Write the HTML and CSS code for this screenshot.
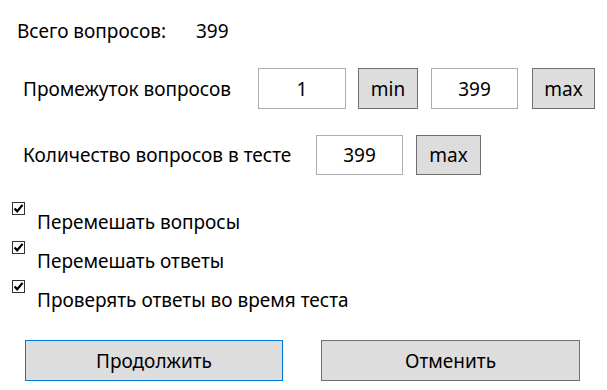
FILE: index.html
```html
<!DOCTYPE html>
<html lang="ru">
<head>
    <meta charset="UTF-8">
    <title>Настройки теста</title>
    <link rel="stylesheet" href="styles.css">
</head>
<body>
    <div class="window">
        <div class="row total">
            <span class="total-label">Всего вопросов:</span>
            <span class="total-value">399</span>
        </div>

        <div class="row range">
            <span class="label range-label">Промежуток вопросов</span>
            <div class="textbox tb-from">1</div>
            <div class="btn btn-min">min</div>
            <div class="textbox tb-to">399</div>
            <div class="btn btn-max">max</div>
        </div>

        <div class="row count">
            <span class="label count-label">Количество вопросов в тесте</span>
            <div class="textbox tb-count">399</div>
            <div class="btn btn-count">max</div>
        </div>

        <div class="checks">
            <div class="check">
                <span class="box"><svg viewBox="0 0 11 11"><path d="M1.6 5.4 L4.2 8.3 L9.6 1.9" /></svg></span>
                <span class="check-text">Перемешать вопросы</span>
            </div>
            <div class="check">
                <span class="box"><svg viewBox="0 0 11 11"><path d="M1.6 5.4 L4.2 8.3 L9.6 1.9" /></svg></span>
                <span class="check-text">Перемешать ответы</span>
            </div>
            <div class="check">
                <span class="box"><svg viewBox="0 0 11 11"><path d="M1.6 5.4 L4.2 8.3 L9.6 1.9" /></svg></span>
                <span class="check-text">Проверять ответы во время теста</span>
            </div>
        </div>

        <div class="actions">
            <div class="btn btn-ok">Продолжить</div>
            <div class="btn btn-cancel">Отменить</div>
        </div>
    </div>
</body>
</html>
```

FILE: styles.css
```css
* {
    margin: 0;
    padding: 0;
    box-sizing: border-box;
}

body {
    width: 607px;
    height: 390px;
    background: #fff;
    color: #000;
    font-family: 'Noto Sans', 'Open Sans', sans-serif;
    font-size: 19px;
    overflow: hidden;
}

.window {
    padding-top: 19px;
}

.row {
    display: flex;
    align-items: center;
}

.total {
    height: 24px;
    padding-left: 17px;
}

.total-label {
    width: 179px;
}

.range {
    margin-top: 25px;
    height: 41px;
    padding-left: 23px;
}

.count {
    margin-top: 26px;
    height: 40px;
    padding-left: 23px;
}

.range-label {
    width: 235px;
}

.count-label {
    width: 293px;
}

.textbox {
    height: 100%;
    border: 1px solid #abadb3;
    display: flex;
    align-items: center;
    justify-content: center;
    background: #fff;
}

.btn {
    height: 100%;
    border: 1px solid #707070;
    background: #dddddd;
    display: flex;
    align-items: center;
    justify-content: center;
}

.tb-from {
    width: 88px;
}

.btn-min {
    margin-left: 12px;
    width: 60px;
}

.tb-to {
    margin-left: 13px;
    width: 87px;
}

.btn-max {
    margin-left: 14px;
    width: 63px;
}

.tb-count {
    width: 87px;
}

.btn-count {
    margin-left: 13px;
    width: 65px;
}

.checks {
    margin-top: 27px;
}

.check {
    height: 39px;
    display: flex;
    align-items: flex-start;
    padding-left: 12px;
}

.box {
    width: 13px;
    height: 13px;
    border: 1px solid #333;
    background: #fff;
    flex-shrink: 0;
}

.box svg {
    display: block;
    width: 11px;
    height: 11px;
}

.box path {
    fill: none;
    stroke: #000;
    stroke-width: 2.2;
}

.check-text {
    margin-left: 12px;
    margin-top: 8px;
    line-height: 24px;
}

.actions {
    margin-top: 21px;
    height: 41px;
    display: flex;
    padding-left: 25px;
}

.btn-ok {
    width: 258px;
    border-color: #0078d7;
}

.btn-cancel {
    margin-left: 38px;
    width: 259px;
}
```
